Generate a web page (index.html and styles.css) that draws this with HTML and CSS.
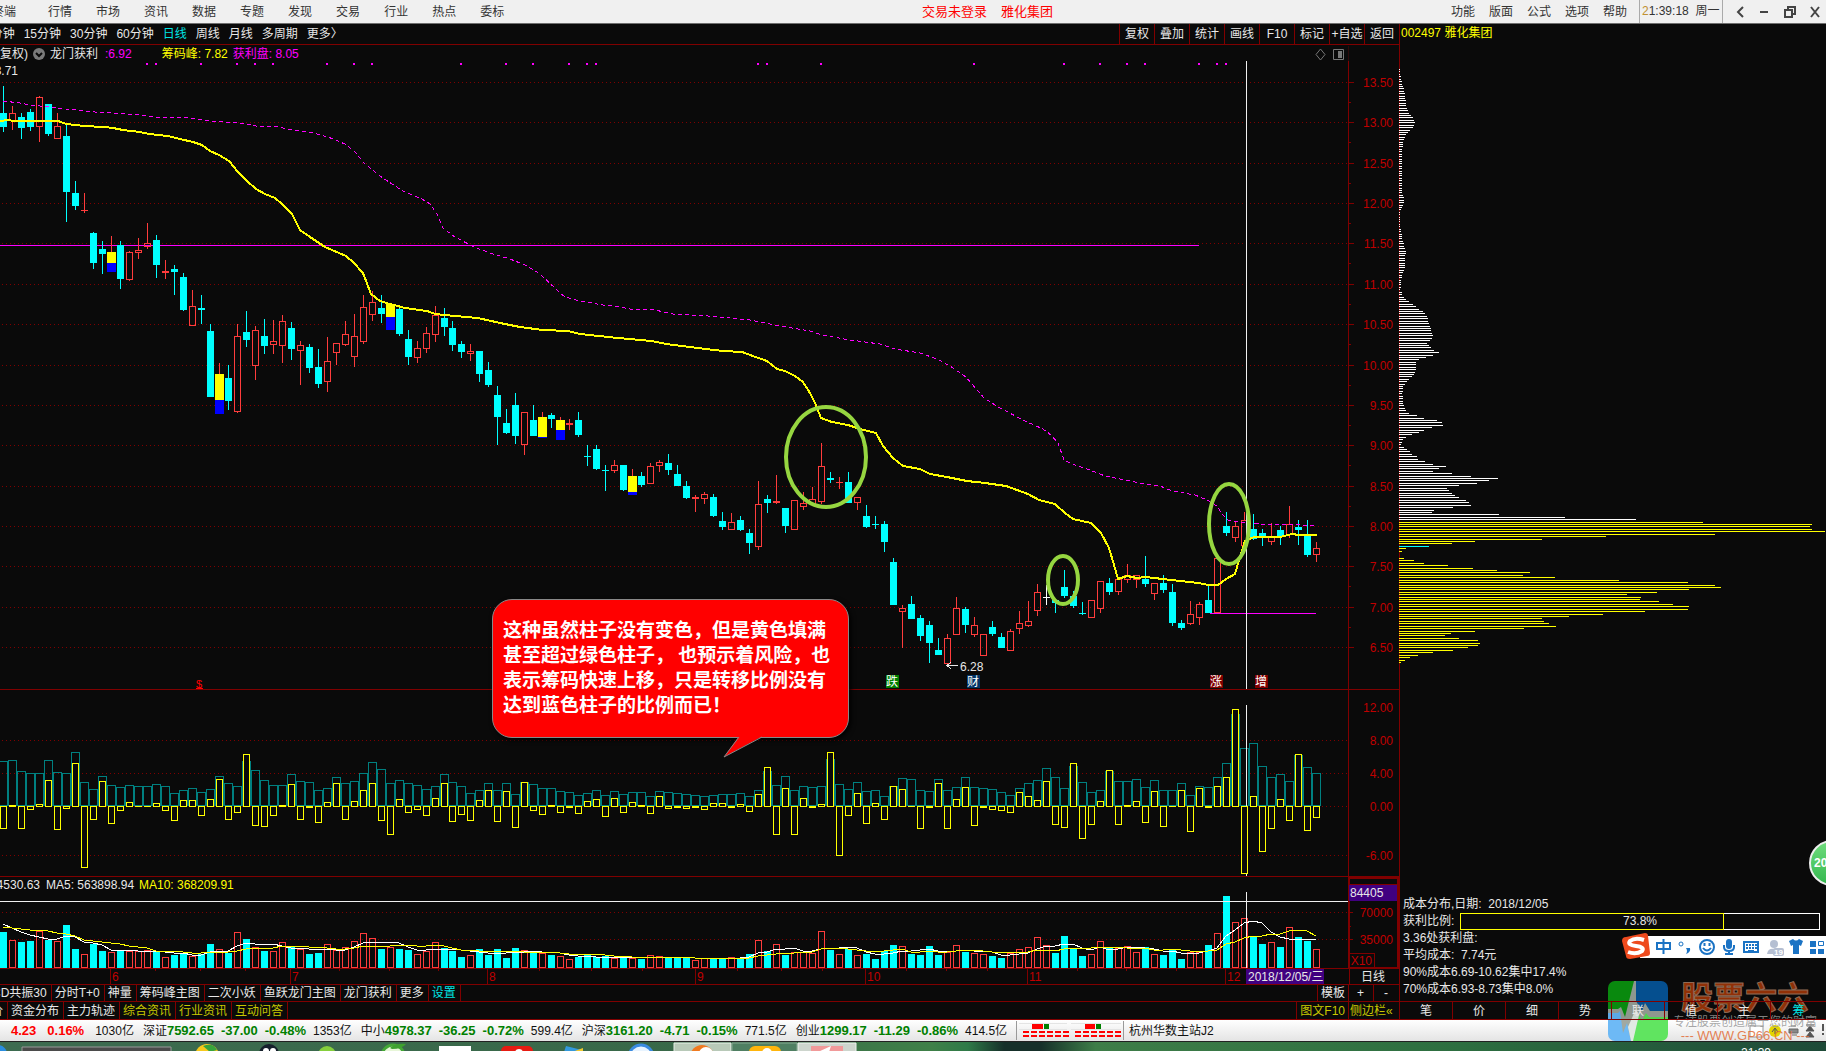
FILE: index.html
```html
<!DOCTYPE html>
<html lang="zh-CN">
<head>
    <meta charset="UTF-8">
    <meta name="viewport" content="width=device-width, initial-scale=1.0">
    <title>雅化集团 002497</title>
    <link rel="stylesheet" href="styles.css">
</head>
<body>

    <header class="menubar">
        <nav class="menu">
            <button>终端</button>
            <button>行情</button>
            <button>市场</button>
            <button>资讯</button>
            <button>数据</button>
            <button>专题</button>
            <button>发现</button>
            <button>交易</button>
            <button>行业</button>
            <button>热点</button>
            <button>委标</button>
        </nav>
        <div class="account"><span>交易未登录</span><span>雅化集团</span></div>
        <nav class="menu menu-right">
            <button>功能</button>
            <button>版面</button>
            <button>公式</button>
            <button>选项</button>
            <button>帮助</button>
        </nav>
        <div class="clock"><b>2</b>1:39:18&nbsp; 周一</div>
        <div class="window-buttons">
            <button aria-label="后退"><svg width="12" height="14"><path d="M9 2 L4 7 L9 12" /></svg></button>
            <button aria-label="最小化"><svg width="12" height="14"><path d="M2 7 H10" /></svg></button>
            <button aria-label="还原"><svg width="14" height="14"><path d="M5 4 V2 H12 V9 H10 M2 5 H9 V12 H2 Z" /></svg></button>
            <button aria-label="关闭"><svg width="12" height="14"><path d="M2 2 L10 12 M10 2 L2 12" /></svg></button>
        </div>
    </header>

    <main class="workspace">
        <section class="left">
            <div class="periods">
                <nav class="period-list">
                    <button>5分钟</button>
                    <button>15分钟</button>
                    <button>30分钟</button>
                    <button>60分钟</button>
                    <button class="active">日线</button>
                    <button>周线</button>
                    <button>月线</button>
                    <button>多周期</button>
                    <button>更多〉</button>
                </nav>
                <nav class="tools">
                    <button>复权</button>
                    <button>叠加</button>
                    <button>统计</button>
                    <button>画线</button>
                    <button>F10</button>
                    <button>标记</button>
                    <button>+自选</button>
                    <button>返回</button>
                </nav>
            </div>

            <div class="legend">
                <span class="adjust">复权)</span>
                <svg class="chevron" width="12" height="12"><circle cx="6" cy="6" r="6" fill="#7a7a7a" /><path d="M3 5 L6 8 L9 5" fill="none" stroke="#0a0a0a" stroke-width="2" /></svg>
                <span>龙门获利</span>
                <span class="magenta value-first">:6.92</span>
                <span class="yellow">筹码峰: 7.82</span>
                <span class="magenta">获利盘: 8.05</span>
                <svg class="legend-icons" width="32" height="14"><path d="M7.5 2 L12 7.5 L7.5 13 L3 7.5 Z M20.500 2.500 H30.500 V12.500 H20.500 Z" fill="none" stroke="#777" /><rect x="25" y="4" width="4" height="7" fill="#777" /></svg>
                <span class="legend-axis"></span>
            </div>

            <div class="charts">
                <svg id="kline" class="chart" viewBox="0 61 1400 629"></svg>
                <svg id="transfer" class="chart" viewBox="0 690 1400 187"></svg>
                <svg id="volume" class="chart" viewBox="0 877 1400 92"></svg>
                <svg id="dates" class="chart" viewBox="0 969 1400 16"></svg>

                <div class="bubble">
                    <p>这种虽然柱子没有变色，但是黄色填满<br>甚至超过绿色柱子，&nbsp;也预示着风险，也<br>表示筹码快速上移，只是转移比例没有<br>达到蓝色柱子的比例而已！</p>
                    <svg class="bubble-tail" width="42" height="23"><path d="M16 0 L1 21 L40 0" fill="#f00" /><path d="M16 1 L1 21 L39 1" fill="none" stroke="#888" /></svg>
                </div>
            </div>

            <div class="tabs">
                <button>MACD共振30</button>
                <button>分时T+0</button>
                <button>神量</button>
                <button>筹码峰主图</button>
                <button>二次小妖</button>
                <button>鱼跃龙门主图</button>
                <button>龙门获利</button>
                <button>更多</button>
                <button class="active">设置</button>
                <span class="fill"></span>
                <button class="first">模板</button>
                <button class="square">+</button>
                <button class="square">-</button>
            </div>
            <div class="tabs tabs-info">
                <button>价</button>
                <button>资金分布</button>
                <button>主力轨迹</button>
                <button class="olive">综合资讯</button>
                <button class="olive">行业资讯</button>
                <button class="olive">互动问答</button>
                <span class="fill"></span>
                <button class="olive first">图文F10</button>
                <button class="olive sidebar-toggle">侧边栏&laquo;</button>
            </div>
        </section>

        <aside class="side">
            <h1>002497 雅化集团</h1>
            <svg id="chips" class="chips" viewBox="0 45 427 630"></svg>
            <div class="cost">
                <p>成本分布,日期:&nbsp; 2018/12/05</p>
                <div class="ratio-row">
                    <span>获利比例:</span>
                    <div class="ratio"><div class="ratio-fill" style="width: 73.8%"></div><span>73.8%</span></div>
                </div>
                <p>3.36处获利盘:</p>
                <p>平均成本:&nbsp; 7.74元</p>
                <p>90%成本6.69-10.62集中17.4%</p>
                <p>70%成本6.93-8.73集中8.0%</p>
            </div>
            <nav class="side-tabs">
                <button>笔</button>
                <button>价</button>
                <button>细</button>
                <button>势</button>
                <button>联</button>
                <button>值</button>
                <button>主</button>
                <button class="active">筹</button>
            </nav>
        </aside>
    </main>

    <footer class="status">
        <span class="index"><b class="up">4.23</b><b class="up">0.16%</b><i>1030亿</i></span>
        <span class="index">深证<b>7592.65</b><b>-37.00</b><b>-0.48%</b><i>1353亿</i></span>
        <span class="index">中小<b>4978.37</b><b>-36.25</b><b>-0.72%</b><i>599.4亿</i></span>
        <span class="index">沪深<b>3161.20</b><b>-4.71</b><b>-0.15%</b><i>771.5亿</i></span>
        <span class="index">创业<b>1299.17</b><b>-11.29</b><b>-0.86%</b><i>414.5亿</i></span>
        <svg class="heat" width="108" height="19">
            <path d="M2 2.500 H50 M54 2.500 H104 M2 8.500 H50 M54 8.500 H104" stroke="#e4e4e4" />
            <rect x="15" y="3" width="11" height="5" fill="#f00" /><rect x="27" y="3" width="5" height="5" fill="#008000" />
            <rect x="68" y="3" width="10" height="5" fill="#f00" /><rect x="79" y="3" width="5" height="5" fill="#008000" />
            <path d="M6 11 H52 M6 15 H52 M58 11 H104 M58 15 H104" stroke="#f00" stroke-width="2" stroke-dasharray="6 2" />
        </svg>
        <span class="server">杭州华数主站J2</span>
        <svg class="tray" width="80" height="20">
            <rect x="4" y="5" width="13" height="11" fill="#fff" stroke="#999" />
            <circle cx="29" cy="10" r="6" fill="#e4d400" /><path d="M26 11 L29 7 L32 11 M29 8 V13" stroke="#555" fill="none" />
            <path d="M43 8 H52 V12 H43 Z M45 5 H50 M46 14 H51" stroke="#666" fill="#888" />
            <path d="M60 10 L64 5 L68 10 Z M60 16 L64 11 L68 16 Z M60 4 H68" fill="#555" stroke="#555" />
            <path d="M77 3 V10 M77 12 V14" stroke="#555" stroke-width="2" />
        </svg>
    </footer>

    <div class="taskbar">
        <svg width="860" height="10">
            <circle cx="-2" cy="12" r="9" fill="#2a8de0" />
            <path d="M22 10 V5 H171 V10 Z" fill="#4b4b4b" stroke="#999" />
            <circle cx="207" cy="14" r="12" fill="#f7c81c" /><path d="M203 4 Q213 0 217 8 L210 10 Z" fill="#37a43b" />
            <circle cx="269" cy="12" r="10" fill="#16202c" /><circle cx="266" cy="9" r="3" fill="#fff" /><circle cx="273" cy="9" r="3" fill="#fff" />
            <circle cx="327" cy="13" r="9" fill="#85cf3c" />
            <circle cx="393" cy="14" r="11" fill="#e7f6d8" stroke="#44a836" stroke-width="3" /><path d="M390 6 Q396 1 406 2 Q402 7 392 7 Z" fill="#3ea12f" />
            <rect x="439" y="4" width="32" height="8" fill="#fff" />
            <rect x="501" y="4" width="32" height="12" rx="5" fill="#e61b12" /><circle cx="519" cy="11" r="4" fill="#fff" />
            <path d="M564 10 L566 4 L582 8 L584 12 Z" fill="#3399dd" /><path d="M572 10 L583 6 V12 Z" fill="#f0c92e" />
            <circle cx="641" cy="15" r="12" fill="#e8f4ff" stroke="#3b8be0" stroke-width="3" />
            <path d="M674 12 V1 H731 V12 Z" fill="#b8c9b8" stroke="#e6f0e6" />
            <circle cx="702" cy="15" r="12" fill="#f07a20" /><circle cx="706" cy="12" r="7" fill="#fff" />
            <path d="M732 12 V1 H797 V12 Z" fill="#4f7f62" stroke="#89a994" />
            <rect x="749" y="4" width="32" height="12" rx="6" fill="#ffb50c" /><circle cx="767" cy="11" r="5" fill="#fff" />
            <path d="M798 12 V1 H856 V12 Z" fill="#cdd5cd" stroke="#edf2ed" />
            <rect x="811" y="4" width="32" height="8" fill="#f19a9a" /><path d="M818 10 L831 4 L829 10 Z" fill="#fff" />
        </svg>
        <span class="taskbar-clock">21:39</span>
    </div>

    <div class="ime">
        <svg width="204" height="28" viewBox="0 0 204 28">
            <rect x="18" y="4" width="190" height="22" fill="#fff" />
            <path d="M4 5 L23 1 Q26 1 26 4 L28 21 Q28 24 25 24 L8 27 Q4 27 4 24 L0 9 Q0 5 4 5 Z" fill="#ee4a1d" />
            <path d="M22 8 Q13 5 8 9 Q5 13 14 14 Q23 15 20 19 Q14 23 6 20" fill="none" stroke="#fff" stroke-width="4" />
            <g fill="none" stroke="#1b73c4" stroke-width="2">
                <path d="M35 11 H48 V17 H35 Z M41.500 7 V22" />
                <circle cx="59" cy="12" r="2" stroke-width="1" />
                <circle cx="85" cy="15" r="7" /><path d="M81 16 Q85 21 89 16 M82.500 11 V14 M87.500 11 V14" />
                <path d="M102 13 V15 Q102 19 107 19 Q112 19 112 15 V13 M107 19 V23 M103 22 H111" />
                <path d="M122 10 H136 V20 H122 Z" /><path d="M124 13 H135 M124 16 H135" stroke-dasharray="2 1" /><path d="M126 19 H132" />
            </g>
            <path d="M64 16 h4 q1 4 -4 6 q2 -3 0 -6 Z" fill="#1b73c4" />
            <rect x="104" y="7" width="6" height="10" rx="3" fill="#1b73c4" />
            <circle cx="152" cy="12" r="4" fill="#b5bfd2" /><path d="M145 22 Q146 16 152 17 L154 22 Z" fill="#b5bfd2" />
            <rect x="151" y="16" width="11" height="8" rx="2" fill="#b5bfd2" /><text x="152" y="23" class="ime-badge">19</text>
            <path d="M167 9 L171 7 Q174 10 177 7 L181 9 L179 14 L177 13 V22 H171 V13 L169 14 Z" fill="#1b73c4" />
            <path d="M188 9 h6 v6 h-6 Z M188 17 h6 v5 h-6 Z M196 17 h6 v5 h-6 Z" fill="#1b73c4" /><path d="M196.500 9.500 h5 v4 h-5 Z" fill="none" stroke="#1b73c4" />
        </svg>
    </div>

    <div class="ball">20</div>

    <div class="brand">
        <svg width="60" height="60" viewBox="0 0 60 60">
            <defs><clipPath id="logoClip"><rect width="60" height="60" rx="7" /></clipPath></defs>
            <g clip-path="url(#logoClip)" opacity="0.93">
                <rect width="60" height="60" fill="#9aa39a" />
                <path d="M0 0 H26 L17 36 L13 26 L10 28 H0 Z" fill="#0a9410" />
                <path d="M28 0 H60 V30 H42 L37 22 L34 30 L28 20 Z" fill="#06559a" />
                <path d="M0 32 H10 L12 30 L15 52 L19 42 L23 60 H0 Z" fill="#64b5f6" />
                <path d="M24 60 L31 34 L34 40 L38 32 L41 36 H60 V60 Z" fill="#55e455" />
                <path d="M25 60 L31 34 L28 28 L20 46 L23 60 Z" fill="#dfe9e2" />
            </g>
        </svg>
        <div class="brand-text">
            <strong>股票六六</strong>
            <span>专注股票创造属于您的财富</span>
            <a href="#">--- WWW.GP66.CN ---</a>
        </div>
    </div>

    <script src="chart.js"></script>
</body>
</html>
```

FILE: styles.css
```css
* {
    box-sizing: border-box;
}

body {
    margin: 0;
    background-color: #0a0a0a;
    color: #e8e8e8;
    font-family: "Liberation Sans", "Noto Sans CJK SC", sans-serif;
    font-size: 12px;
    line-height: 16px;
    min-height: 100vh;
    display: flex;
    flex-direction: column;
    overflow-x: hidden;
    position: relative;
}

button {
    background: none;
    border: none;
    padding: 0;
    color: inherit;
    font: inherit;
    white-space: nowrap;
    cursor: pointer;
}

p {
    margin: 0;
}

.magenta {
    color: #ff00ff;
}

.yellow {
    color: #ffff00;
}

/* top menu */
.menubar {
    height: 24px;
    display: flex;
    align-items: center;
    background-color: #f0f0f0;
    border-bottom: 1px solid #6e6e6e;
    color: #333;
}

.menu {
    display: flex;
    gap: 24px;
    margin-left: -8px;
}

.menu button:first-child {
    margin-right: 8px;
}

.account {
    flex: 1;
    display: flex;
    justify-content: center;
    gap: 14px;
    padding-left: 20px;
    font-size: 13px;
    color: #ff0000;
}

.menu-right {
    gap: 14px;
    margin: 0 12px 0 0;
}

.menu-right button:first-child {
    margin-right: 0;
}

.clock {
    width: 84px;
    height: 23px;
    line-height: 22px;
    padding-left: 2px;
    border-left: 1px solid #aaa;
    border-right: 1px solid #aaa;
    white-space: nowrap;
}

.clock b {
    font-weight: normal;
    color: #c09030;
}

.window-buttons {
    width: 103px;
    display: flex;
    justify-content: space-between;
    padding: 0 5px 0 11px;
}

.window-buttons svg {
    display: block;
    fill: none;
    stroke: #444;
    stroke-width: 2;
}

/* layout */
.workspace {
    display: flex;
}

.left {
    flex: 1;
    min-width: 0;
}

.side {
    width: 426px;
    display: flex;
    flex-direction: column;
}

.periods {
    height: 21px;
    display: flex;
    justify-content: space-between;
    border-bottom: 1px solid #800000;
    border-right: 1px solid #800000;
    line-height: 18px;
}

.period-list {
    display: flex;
    gap: 9px;
    margin-left: -16px;
}

.period-list .active,
.tabs .active,
.side-tabs .active {
    color: #00e5e5;
}

.tools {
    display: flex;
}

.tools button {
    width: 35px;
    border-left: 1px solid #800000;
}

.legend {
    height: 16px;
    display: flex;
    align-items: center;
    line-height: 16px;
    padding-top: 1px;
    border-right: 1px solid #800000;
}

.chevron {
    margin: 0 5px;
}

.value-first {
    margin: 0 30px 0 7px;
}

.legend .yellow {
    margin-right: 5px;
}

.legend-icons {
    margin-left: auto;
}

.legend-axis {
    width: 51px;
    height: 16px;
    margin-left: 3px;
    border-left: 1px solid #2c0a0a;
}

/* charts */
.charts {
    position: relative;
}

.chart {
    display: block;
    width: 100%;
    height: auto;
    shape-rendering: crispEdges;
}

.chart text {
    font-size: 12px;
    fill: #e8e8e8;
}

.chart text.axis {
    fill: #c00000;
    text-anchor: end;
}

.chart text.end {
    text-anchor: end;
}

.chart text.month {
    fill: #c00000;
}

.chart text.yellow {
    fill: #ffff00;
}

.chart text.mark {
    fill: #fff;
    text-anchor: middle;
}

.chart text.small {
    fill: #ff0000;
    font-size: 11px;
    text-anchor: middle;
}

.grid {
    stroke: #800000;
    stroke-dasharray: 1 3;
}

.frame {
    fill: none;
    stroke: #800000;
}

.arrow {
    fill: none;
    stroke: #e8e8e8;
}

.ring {
    fill: none;
    stroke: #96d640;
    stroke-width: 4;
    shape-rendering: auto;
}

.bubble {
    position: absolute;
    left: 492px;
    top: 538px;
    width: 357px;
    height: 139px;
    padding: 16px 0 0 10px;
    background-color: #ff0000;
    border: 1px solid #888;
    border-radius: 20px;
    box-shadow: 2px 2px 5px #000;
    color: #fff;
    font-family: "Noto Sans CJK SC", sans-serif;
    font-size: 19px;
    font-weight: bold;
    line-height: 25px;
    white-space: nowrap;
}

.bubble-tail {
    position: absolute;
    left: 230px;
    top: 136px;
}

/* indicator tabs */
.tabs {
    height: 17px;
    display: flex;
    border-bottom: 1px solid #800000;
    border-right: 1px solid #800000;
    overflow: hidden;
}

.tabs-info {
    height: 18px;
}

.tabs button {
    padding: 0 4px 0 3px;
    line-height: 16px;
    border-right: 1px solid #800000;
}

.tabs button:first-child {
    margin-left: -29px;
}

.tabs-info button:first-child {
    margin-left: -12px;
}

.tabs .fill {
    flex: 1;
}

.tabs .first {
    padding: 0 3px;
    border-left: 1px solid #800000;
}

.tabs .square {
    width: 25px;
}

.tabs button:last-child {
    border-right: none;
}

.tabs .sidebar-toggle {
    width: 50px;
    padding: 0 1px;
    text-align: left;
}

.tabs .olive {
    color: #c8c800;
}

/* chip distribution panel */
.side h1 {
    margin: 0;
    height: 21px;
    padding-left: 1px;
    font-size: 12px;
    font-weight: normal;
    line-height: 19px;
    color: #ffff00;
}

.chips {
    position: relative;
    display: block;
    width: 427px;
    margin-left: -1px;
    shape-rendering: crispEdges;
}

.cost {
    margin-top: auto;
    padding: 0 6px 3px 3px;
    line-height: 17px;
}

.ratio-row {
    display: flex;
}

.ratio-row > span {
    width: 57px;
    white-space: nowrap;
}

.ratio {
    flex: 1;
    position: relative;
    height: 17px;
    border: 1px solid #fff;
    text-align: center;
    line-height: 15px;
}

.ratio-fill {
    position: absolute;
    left: -1px;
    top: -1px;
    height: 17px;
    border: 1px solid #ffff00;
}

/* the labels stay readable above the brand logo */
.side-tabs {
    position: relative;
    z-index: 2;
    height: 19px;
    display: flex;
    border-top: 1px solid #800000;
    border-bottom: 1px solid #800000;
}

.side-tabs button {
    width: 53px;
    border-right: 1px solid #800000;
}

.side-tabs button:last-child {
    flex: 1;
    border-right: none;
}

/* index quotes */
.status {
    height: 21px;
    display: flex;
    align-items: center;
    background: linear-gradient(#ffffff, #e4e4e4);
    color: #111;
    white-space: nowrap;
    padding-left: 11px;
}

.index {
    display: flex;
    margin-right: 9px;
}

.index b {
    font-size: 13px;
    color: #008000;
    margin-right: 7px;
}

.index b.up {
    color: #ff0000;
    margin-right: 11px;
}

.index i {
    font-style: normal;
}

.heat {
    border-left: 1px solid #999;
    border-right: 1px solid #999;
    margin-right: 5px;
}

.tray {
    margin-left: auto;
}

.taskbar {
    height: 10px;
    display: flex;
    overflow: hidden;
    justify-content: space-between;
    border-top: 1px solid #222;
    background: linear-gradient(90deg, #3d6b50, #386848 40%, #3f8048 51%, #2f7a48 53%, #16302a 55%, #16302a 57%, #3e7d48 60%, #2d6e40 80%, #1e4a38 100%);
}

.taskbar-clock {
    margin-right: 55px;
    line-height: 22px;
    color: #fff;
}

/* floating windows */
.ime {
    position: absolute;
    right: 0;
    top: 932px;
    height: 28px;
}

.ime-badge {
    font-size: 8px;
    font-weight: bold;
    fill: #fff;
}

.ball {
    position: absolute;
    right: -29px;
    top: 840px;
    width: 46px;
    height: 46px;
    padding-left: 3px;
    border: 2px solid #eee;
    border-radius: 50%;
    background: linear-gradient(#6fdc7c, #35b850);
    color: #fff;
    font-weight: bold;
    line-height: 42px;
}

.brand {
    position: absolute;
    z-index: 1;
    right: 8px;
    top: 981px;
    width: 210px;
    height: 62px;
    display: flex;
    gap: 4px;
    pointer-events: none;
}

.brand-text {
    width: 146px;
    display: flex;
    flex-direction: column;
    align-items: center;
    white-space: nowrap;
}

.brand-text strong {
    font-size: 32px;
    line-height: 34px;
    color: rgba(170, 56, 6, 0.85);
    -webkit-text-stroke: 1px #8f6a55;
}

.brand-text span {
    line-height: 14px;
    color: rgba(150, 150, 150, 0.85);
}

.brand-text a {
    font-size: 13px;
    line-height: 14px;
    color: rgba(226, 108, 52, 0.85);
    text-decoration: none;
}
```

FILE: chart.js
```js
var BASE = 2.995;
var STEP = 8.99;

function barX(i) {
    return Math.round(BASE + STEP * i);
}

function rect(x, y, w, h, color) {
    return '<rect x="' + x + '" y="' + y + '" width="' + w + '" height="' + h + '" fill="' + color + '"/>';
}

function box(x, y, w, h, color, fill) {
    if (h < 3) return rect(x, y, w, Math.max(h, 1), color);
    return '<rect x="' + (x + 0.5) + '" y="' + (y + 0.5) + '" width="' + (w - 1) + '" height="' + (h - 1) + '" fill="' + (fill || 'none') + '" stroke="' + color + '"/>';
}

function text(x, y, str, cls) {
    return '<text x="' + x + '" y="' + y + '" class="' + (cls || '') + '">' + str + '</text>';
}

function gridLine(y) {
    return '<path class="grid" d="M2 ' + (y + 0.5) + ' H1348"/>';
}

function curve(points, color, width, dash) {
    return '<polyline points="' + points + '" fill="none" stroke="' + color + '" stroke-width="' + width + '"' +
        (dash ? ' stroke-dasharray="' + dash + '"' : '') + '/>';
}

// c = falling, r = rising, w = flat, y = rising with chip transfer (extra number is the end of the blue part)
// kind, high, body top, body bottom, low
var candles = `
c 86 113 127 132|r 106 113 121 130|c 113 117 128 139|c 109 112 127 131|r 96 97 127 142|c 104 104 134 136
r 113 126 139 139|c 124 136 192 222|c 181 193 206 210|r 193 210 211 213|c 232 233 263 269|c 241 249 254 274
y 236 252 263 272|c 241 245 279 289|r 251 252 280 281|r 238 250 253 259|r 223 243 247 249|c 235 240 265 278
r 260 271 273 279|c 265 269 272 295|c 273 277 310 311|r 290 306 326 326|c 295 308 310 324|c 324 331 397 397
y 363 374 400 414|c 365 378 401 410|r 324 336 412 413|c 311 332 340 347|r 326 330 366 380|c 319 336 346 354
r 320 341 345 354|r 315 321 346 363|c 322 328 349 360|r 341 345 351 385|c 344 347 368 373|c 349 367 384 388
r 337 361 382 392|r 343 343 353 365|r 321 334 345 346|r 314 336 357 367|r 295 307 342 344|r 291 302 315 321
c 295 308 314 323|y 304 304 317 330|c 308 309 334 336|c 330 339 357 365|r 341 348 358 363|r 327 333 349 353
r 306 315 335 342|c 308 318 327 336|c 321 328 345 351|c 341 344 352 358|r 344 351 354 361|c 351 351 374 382
c 362 370 385 387|c 386 395 417 445|c 409 423 433 434|c 393 405 436 444|r 412 412 445 455|c 405 420 436 436
y 412 417 437 438|c 413 415 419 428|y 417 420 430 440|r 419 423 425 430|c 412 420 435 437|c 445 456 457 466
c 445 449 469 470|c 465 470 471 491|r 460 465 471 473|c 465 465 490 491|y 469 476 492 495|c 472 476 485 487
r 463 466 484 484|r 460 462 466 472|c 454 463 470 475|c 465 474 486 486|c 481 486 498 499|r 495 497 499 512
r 492 494 499 504|c 494 497 516 517|c 512 521 527 530|r 513 522 530 530|c 516 520 530 531|c 529 533 543 554
r 481 504 547 550|c 495 499 503 513|r 475 501 503 504|c 508 508 526 533|r 500 500 530 530|r 492 503 507 510
r 487 499 504 504|r 443 466 502 504|c 472 478 480 483|r 477 482 483 489|c 472 482 503 503|r 497 497 503 510
c 505 516 527 528|c 516 524 525 529|c 521 524 542 552|c 558 562 605 605|r 605 608 612 648|c 596 604 619 619
c 615 618 636 641|c 621 625 643 663|c 638 650 655 655|r 634 638 664 664|r 597 608 635 635|c 607 609 625 633
r 617 625 635 637|r 634 634 656 656|c 621 627 634 636|c 633 637 648 648|r 629 631 651 651|r 611 623 629 634
r 601 621 626 627|r 584 592 611 616|w 585 597 598 605|c 599 600 603 613|c 570 587 596 598|c 591 596 606 608
c 602 613 614 615|r 600 600 618 618|r 581 581 609 613|c 578 583 592 595|r 579 579 592 595|r 564 575 580 583
r 575 575 580 588|c 556 579 584 587|r 583 583 594 600|c 575 583 590 593|c 584 592 623 626|c 620 623 628 630
r 601 614 624 625|r 602 604 618 625|c 586 600 613 613|r 558 558 613 613|c 512 526 533 536|r 522 526 538 542
r 512 520 546 546|c 514 529 539 540|c 529 533 537 546|r 523 537 542 545|c 526 530 536 545|r 506 524 535 538
c 520 527 530 545|c 520 536 555 557|r 542 548 555 562`.trim().split(/[|\n]/).map(function (row) {
    return row.split(' ');
});

// scale bar height, transfer bar height
var transfers = [
    45,-22, 46,1, 35,-22, 33,-3, 33,2, 46,26, 34,-23, 33,-2, 54,43, 24,-61, 17,-13, 30,25, 21,-17, 19,-4, 21,4,
    20,0, 20,0, 22,3, 20,-4, 13,-14, 16,6, 18,6, 14,-9, 17,7, 30,27, 23,-13, 20,-6, 45,52, 36,-19, 26,-20,
    21,-9, 21,1, 32,22, 25,-13, 24,-1, 16,-16, 18,4, 29,23, 23,-13, 25,5, 33,16, 44,23, 37,-14, 23,-28, 26,7,
    23,-6, 21,-3, 17,-9, 20,8, 32,23, 24,-15, 20,-8, 13,-14, 16,6, 23,16, 16,-15, 23,15, 12,-21, 24,24, 22,-4,
    18,-8, 18,1, 15,-6, 14,-1, 11,-7, 13,5, 16,7, 11,-10, 15,8, 12,-6, 14,4, 14,1, 10,-7, 15,10, 14,-2,
    13,-1, 12,-2, 11,-1, 10,-3, 11,3, 12,3, 12,-1, 13,2, 10,-5, 16,12, 35,39, 21,-28, 30,18, 16,-28, 20,8,
    19,-1, 20,2, 47,54, 22,-49, 17,-9, 24,13, 15,-17, 16,3, 10,-13, 20,20, 28,17, 27,0, 16,-22, 15,-1, 27,23,
    16,-22, 19,7, 29,19, 19,-19, 18,-1, 17,-3, 14,-4, 11,-6, 18,14, 23,10, 26,6, 38,25, 29,-18, 18,-21, 40,43,
    24,-32, 14,-18, 16,5, 35,36, 25,-18, 25,1, 27,5, 19,-16, 26,15, 16,-20, 16,0, 23,16, 11,-25, 20,18, 19,-1,
    29,20, 43,29, 92,97, 58,-67, 63,10, 40,-45, 29,-22, 32,7, 25,-14, 51,52, 39,-24, 33,-11
];

var volumes = [
    36,28,26,27,37,28,27,43,19,14,24,17,16,17,17,17,18,16,11,13,15,12,14,24,19,15,36,29,21,17,17,26,21,19,14,15,
    24,18,21,27,35,30,19,21,19,18,14,17,26,20,17,11,13,19,13,19,10,20,18,16,15,13,12,9,11,13,11,12,10,11,10,9,13,
    12,10,10,11,8,10,10,10,11,10,14,28,17,24,13,16,16,15,37,18,14,19,13,14,9,17,23,22,14,13,22,13,16,23,16,15,14,
    12,10,15,19,21,31,23,15,32,19,12,14,27,20,20,22,16,21,14,13,19,9,16,16,23,35,72,46,50,32,24,26,21,41,31,27,19
];

// the days before the first visible bar, needed by the averages
var earlier = [38, 38, 38, 38, 38, 46, 46, 46, 46];

function drawKline() {
    var out = '';
    var i, y;
    for (i = 0; i < 15; i++) {
        y = Math.round(82 + i * 40.36);
        out += gridLine(y);
        out += rect(1349, y, 5, 1, '#800000');
        if (i < 14) out += rect(1349, y + 20, 2, 1, '#800000');
        out += text(1393, y + 5, (13.5 - i * 0.5).toFixed(2), 'axis');
    }
    out += rect(0, 245, 1199, 1, '#ff00ff') + rect(1210, 613, 106, 1, '#ff00ff');

    candles.forEach(function (c, n) {
        var x = barX(n);
        var color = c[0] === 'c' ? '#00ffff' : c[0] === 'w' ? '#ffffff' : '#ff3c3c';
        var high = +c[1], top = +c[2], bottom = +c[3], low = +c[4];
        if (c[0] === 'y') {
            out += rect(x, high, 1, top - high, color);
            out += rect(x - 4, top, 9, bottom - top, '#ffff00');
            out += rect(x - 4, bottom, 9, low - bottom, '#0000ff');
            return;
        }
        out += rect(x, high, 1, top - high, color) + rect(x, bottom, 1, low - bottom, color);
        if (c[0] === 'r') out += box(x - 3, top, 7, bottom - top, color);
        else out += rect(x - 3, top, 7, bottom - top, color);
    });

    out += curve('3,101 20,103 30,105 50,107 66,109 95,112 142,115 155,117 183,117 210,121 240,123 256,126 278,127 292,130 313,133 328,137 345,144 355,152 364,163 380,176 395,186 405,192 422,199 430,204 437,214 443,228 455,237 474,247 490,253 510,259 525,265 540,274 558,291 565,297 580,301 603,305 620,307 630,309 655,310 673,314 708,316 730,318 750,320 765,323 780,326 810,331 822,335 850,340 880,344 895,349 920,353 937,359 950,366 966,377 984,398 1000,408 1025,421 1043,429 1051,435 1058,443 1064,460 1075,465 1090,470 1105,476 1140,483 1160,486 1172,491 1195,495 1207,500 1217,506 1222,514 1228,520 1238,522 1260,524 1285,524 1300,525 1317,525', '#ff00ff', 1, '4 3');
    out += curve('0,121 8,120 14,121 58,121 66,124 84,126 104,127 113,128 123,130 140,132 149,134 168,136 180,139 193,142 202,145 210,151 219,155 229,161 238,172 247,181 256,189 265,194 275,198 282,204 292,214 300,230 310,237 325,247 346,256 354,263 363,273 371,294 380,301 390,304 405,308 427,311 435,314 455,316 478,318 500,323 520,327 543,330 568,331 580,334 618,338 640,340 652,341 666,344 706,349 723,351 742,352 750,355 767,361 777,369 785,371 795,376 803,382 810,393 815,403 821,418 832,422 848,425 860,429 876,433 883,446 893,458 903,466 920,469 930,474 947,477 967,481 985,483 1006,486 1028,494 1039,500 1055,504 1065,513 1073,519 1091,523 1101,533 1109,548 1114,565 1118,579 1127,576 1137,578 1146,577 1171,580 1199,583 1208,585 1218,585 1226,579 1235,574 1239,560 1245,541 1254,537 1280,537 1292,534 1299,535 1317,535', '#ffff00', 2);

    [147, 156, 201, 237, 255, 273, 327, 354, 372, 461, 506, 533, 569, 587, 596, 758, 767, 821, 974, 1064, 1100, 1127, 1145, 1199, 1217, 1226].forEach(function (x) {
        out += rect(x - 1, 63, 2, 2, '#ff00ff');
    });

    [[886, '跌', '#008000'], [967, '财', '#003366'], [1210, '涨', '#800000'], [1255, '增', '#800000']].forEach(function (m) {
        out += rect(m[0], 675, 13, 13, m[2]) + text(m[0] + 6, 686, m[1], 'mark');
    });

    out += text(18, 75, '13.71', 'end');
    out += text(960, 671, '6.28');
    out += '<path class="arrow" d="M958 665.5 H948 M951 662 L947 665.5 L951 669"/>';
    out += text(199, 688, '$', 'small') + rect(196, 688, 7, 1, '#ff0000');
    out += rect(1246, 61, 1, 628, '#f0f0f0');
    out += '<ellipse class="ring" cx="826" cy="457" rx="40" ry="50"/><ellipse class="ring" cx="1063" cy="580" rx="15" ry="24"/><ellipse class="ring" cx="1229" cy="524" rx="20" ry="40"/>';
    out += rect(1348, 61, 1, 628, '#800000') + rect(1399, 61, 1, 628, '#800000') + rect(0, 689, 1400, 1, '#800000');
    document.getElementById('kline').innerHTML = out;
}

function drawTransfer() {
    var zero = 806;
    var out = '';
    [[707, '12.00'], [740, '8.00'], [773, '4.00'], [806, '0.00'], [855, '-6.00']].forEach(function (g) {
        if (g[0] > 707) out += gridLine(g[0]);
        out += text(1393, g[0] + 5, g[1], 'axis');
    });
    for (var i = 0; i < transfers.length; i += 2) {
        var x = barX(i / 2);
        out += box(x - 4, zero - transfers[i], 9, transfers[i], '#008080');
    }
    out += rect(1246, 705, 1, 171, '#f0f0f0');
    for (i = 0; i < transfers.length; i += 2) {
        var d = transfers[i + 1];
        x = barX(i / 2);
        out += d < 0 ? box(x - 3, zero, 7, 1 - d, '#ffff00', '#0a0a0a') : box(x - 3, zero - d, 7, d + 1, '#ffff00', '#0a0a0a');
    }
    out += rect(1348, 690, 1, 186, '#800000') + rect(1399, 690, 1, 186, '#800000') + rect(0, 876, 1400, 1, '#800000');
    document.getElementById('transfer').innerHTML = out;
}

function average(days) {
    var all = earlier.concat(volumes);
    return volumes.map(function (v, i) {
        var sum = 0;
        for (var k = 0; k < days; k++) sum += all[i + earlier.length - k];
        return barX(i) + ',' + Math.round(968 - sum / days);
    }).join(' ');
}

function drawVolume() {
    var out = gridLine(912) + gridLine(939);
    out += text(40, 889, '84530.63', 'end') + text(46, 889, 'MA5: 563898.94') + text(139, 889, 'MA10: 368209.91', 'yellow');
    volumes.forEach(function (v, i) {
        var x = barX(i);
        if (candles[i][0] === 'c') out += rect(x - 3, 968 - v, 7, v, '#00ffff');
        else out += box(x - 3, 968 - v, 7, v, '#ff3c3c');
    });
    out += rect(0, 901, 1348, 1, '#f0f0f0') + rect(1246, 892, 1, 76, '#f0f0f0');
    out += curve(average(5), '#ffffff', 1) + curve(average(10), '#ffff00', 1);
    out += '<rect class="frame" x="1349" y="878" width="49" height="90" stroke-width="2"/>';
    out += rect(1349, 885, 48, 16, '#400080') + rect(1349, 884, 48, 1, '#800000');
    out += text(1350, 897, '84405') + text(1393, 917, '70000', 'axis') + text(1393, 944, '35000', 'axis');
    out += rect(1349, 912, 4, 1, '#800000') + rect(1349, 939, 4, 1, '#800000') + rect(1349, 926, 2, 1, '#800000');
    out += '<rect class="frame" x="1349.5" y="953.5" width="25" height="14"/>' + text(1372, 965, 'X10', 'axis');
    out += rect(1399, 877, 1, 92, '#800000') + rect(0, 968, 1400, 1, '#800000');
    document.getElementById('volume').innerHTML = out;
}

function drawDates() {
    var out = '';
    [[110, '6'], [290, '7'], [487, '8'], [695, '9'], [865, '10'], [1027, '11'], [1225, '12']].forEach(function (m) {
        out += rect(m[0], 969, 1, 15, '#800000') + text(m[0] + 2, 981, m[1], 'month');
    });
    [155, 200, 245, 339, 389, 438, 539, 591, 642, 737, 781, 822, 906, 946, 987, 1077, 1126, 1176].forEach(function (x) {
        out += rect(x, 969, 1, 2, '#800000');
    });
    out += rect(1246, 969, 78, 15, '#400080') + text(1248, 981, '2018/12/05/三');
    out += rect(1349, 969, 1, 15, '#800000') + text(1361, 981, '日线');
    out += rect(1399, 969, 1, 16, '#800000') + rect(0, 984, 1400, 1, '#800000');
    document.getElementById('dates').innerHTML = out;
}

// chips held at each price: above cost (white), below (yellow), current row (cyan)
var chipsAbove = [
    1,1,1,2,2,3,3,4,5,5,6,6,6,7,7,7,8,9,10,12,14,15,16,15,14,11,9,7,6,5,4,4,4,3,3,3,
    3,3,3,3,3,3,3,3,3,3,3,3,3,3,3,3,4,5,5,5,4,3,2,1,1,1,1,1,1,1,2,2,3,3,3,4,5,5,6,7,7,6,6,6,6,6,6,5,4,3,3,2,2,2,2,1,
    3,3,5,7,10,14,17,20,24,26,28,29,29,30,31,32,32,33,34,33,31,28,30,32,35,40,34,27,20,17,17,17,17,16,15,13,10,8,6,
    4,4,4,3,4,4,4,4,5,6,7,10,18,25,38,43,44,33,25,20,13,7,4,3,2,5,8,11,13,18,19,26,34,47,40,34,53,72,99,90,78,60,48,
    50,53,56,60,67,70,72,54,35,33,100,166,237
];
var chipsBelow = [
    304,413,411,413,426,316,207,143,76,53,30,7,3,0,0,5,15,25,49,74,98,131,124,156,220,289,316,322,290,258,228,242,
    241,260,274,290,289,246,204,170,143,145,150,157,125,76,52,46,60,79,81,79,69,54,34,19,11,6,2
];

function drawChips() {
    var rows = chipsAbove.concat(chipsBelow);
    var step = 593 / (rows.length - 1);
    var out = '';
    rows.forEach(function (len, i) {
        var color = i < chipsAbove.length ? '#ffffff' : i === chipsAbove.length + 10 ? '#00ffff' : '#ffff00';
        out += rect(0, Math.round(69 + i * step), len, 1, color);
    });
    document.getElementById('chips').innerHTML = out;
}

drawKline();
drawTransfer();
drawVolume();
drawDates();
drawChips();
```
